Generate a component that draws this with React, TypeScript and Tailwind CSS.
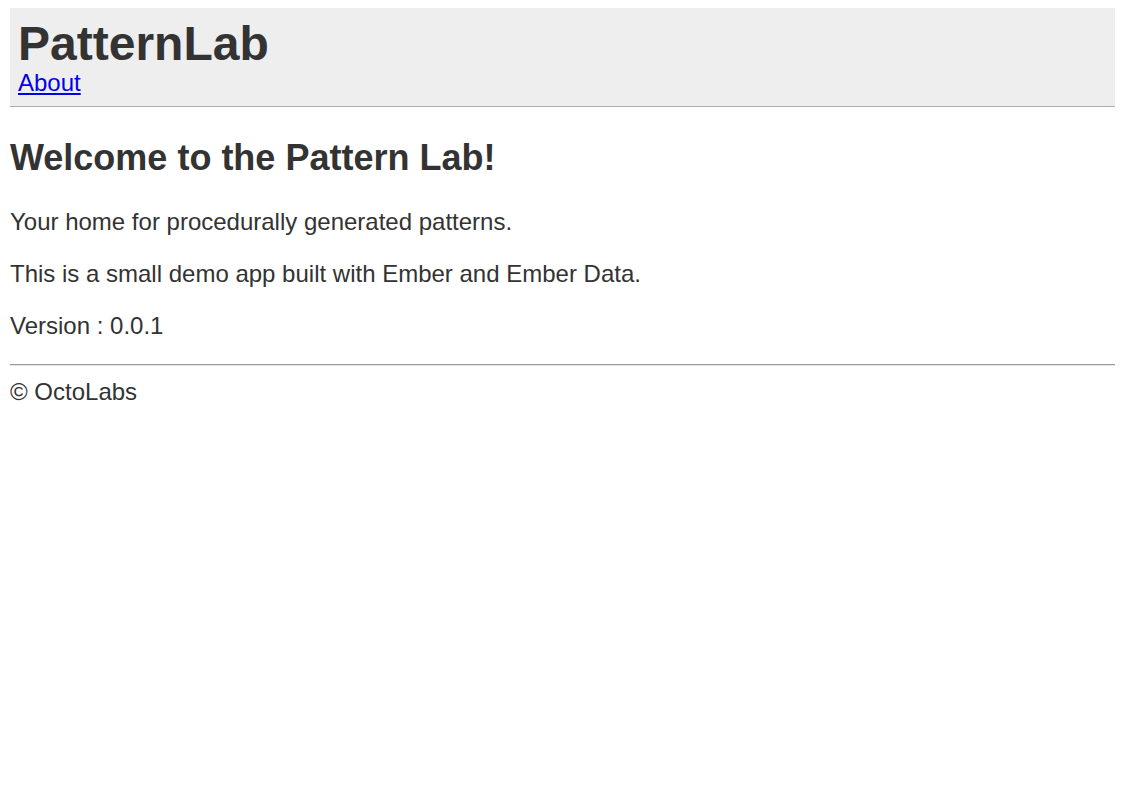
export default function App() {
  return (
    <div className="min-h-screen bg-white pt-[8px] pl-[10px] pr-[8px] text-[#333333] font-['Liberation_Sans',Arial,sans-serif]">
      {/* Header */}
      <header className="bg-[#eeeeee] border-b border-[#aaaabb] pt-[11px] pb-[8px] px-[8px]">
        <h1 className="text-[48px] leading-[50px] font-bold">PatternLab</h1>
        <nav>
          <a href="#" className="text-[24px] leading-[28px] text-[#0000ee] underline">
            About
          </a>
        </nav>
      </header>

      <main>
        <h2 className="text-[36px] leading-[41px] font-bold mt-[30px] mb-[30px]">
          Welcome to the Pattern Lab!
        </h2>
        <p className="text-[24px] leading-[28px] mb-[24px]">
          Your home for procedurally generated patterns.
        </p>
        <p className="text-[24px] leading-[28px] mb-[24px]">
          This is a small demo app built with Ember and Ember Data.
        </p>
        <p className="text-[24px] leading-[28px]">Version : 0.0.1</p>
      </main>

      <hr className="mt-[24px] mb-[12px] border-t border-b border-t-[#9a9a9a] border-b-[#e4e4e4]" />

      <footer className="text-[24px] leading-[28px]">© OctoLabs</footer>
    </div>
  );
}
